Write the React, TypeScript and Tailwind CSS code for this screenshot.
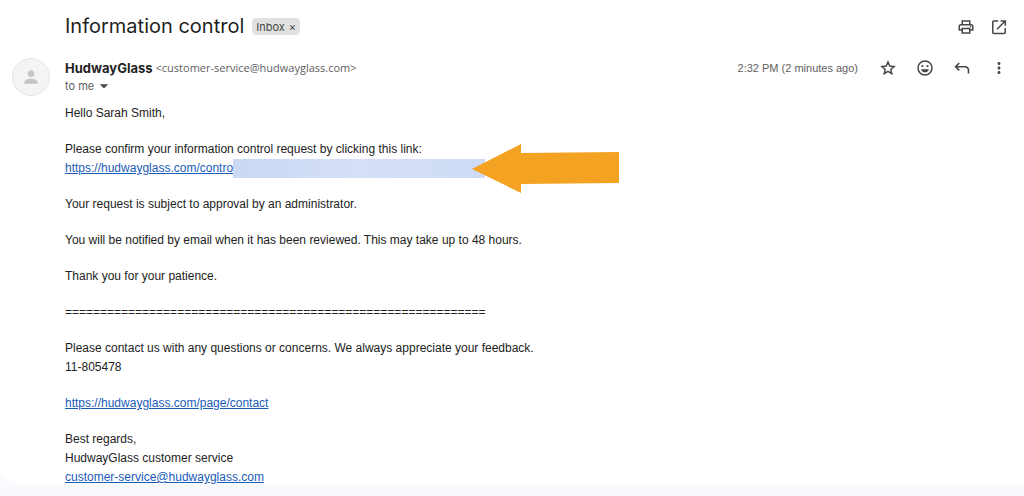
import React from 'react';
import { MdOutlinePrint, MdMoreVert, MdPerson, MdArrowDropDown } from 'react-icons/md';

interface IconButtonProps {
  label: string;
  children: React.ReactNode;
}

const IconButton: React.FC<IconButtonProps> = ({ label, children }) => (
  <button
    type="button"
    aria-label={label}
    className="flex size-5 items-center justify-center text-[#444746]"
  >
    {children}
  </button>
);

const OpenInNewIcon = () => (
  <svg viewBox="0 0 18 18" className="size-[18px]" fill="none" stroke="currentColor" strokeWidth="1.5">
    <path d="M8.2 3H3.7a.9.9 0 0 0-.9.9v10.6c0 .5.4.9.9.9h10.6c.5 0 .9-.4.9-.9V10M10.6 3h4.7v4.7M15 3.3 7 11.3" />
  </svg>
);

const StarIcon = () => (
  <svg viewBox="0 0 18 18" className="size-[18px]" fill="none" stroke="currentColor" strokeWidth="1.5">
    <path d="m9 3 1.7 4.1 4.4.4-3.300 2.900 1 4.300L9 12.400l-3.800 2.300 1-4.300-3.300-2.900 4.400-.4z" />
  </svg>
);

const SmileIcon = () => (
  <svg viewBox="0 0 18 18" className="size-[18px]" fill="none" stroke="currentColor" strokeWidth="1.5">
    <circle cx="9" cy="9" r="7" />
    <g fill="currentColor" stroke="none">
      <circle cx="6.4" cy="7" r="1.1" />
      <circle cx="11.6" cy="7" r="1.1" />
      <path d="M5 10.2h8c-.5 1.9-2.1 3.100-4 3.100s-3.500-1.200-4-3.100z" />
    </g>
  </svg>
);

const ReplyIcon = () => (
  <svg viewBox="0 0 18 18" className="size-[18px]" fill="none" stroke="currentColor" strokeWidth="1.6">
    <path d="M6.3 4 2.6 7.7l3.7 3.7M3 7.7h8.6c2.3 0 3.9 1.5 3.9 3.7v3.2" />
  </svg>
);

const ArrowMarker = () => (
  <svg viewBox="0 0 147 51" className="absolute -top-4 left-[239px] h-[51px] w-[147px]" fill="#f3a221">
    <path d="M0 26 49 1v9l98-1v31l-98 1v9z" />
  </svg>
);

const linkClass = 'text-[#1a5bb8] underline';

const Subject = () => (
  <div className="flex items-center pt-4 pr-[15px]">
    <h1 className="text-xl leading-[21px] text-[#1f1f1f]">Information control</h1>
    <span className="ml-2 flex h-[17px] items-center gap-1 rounded bg-[#e1e1e0] px-1 text-[11px] leading-4 text-[#444746]">
      Inbox
      <button type="button" aria-label="Remove label Inbox" className="leading-4">
        ×
      </button>
    </span>
    <div className="ml-auto flex gap-[13px]">
      <IconButton label="Print all">
        <MdOutlinePrint className="size-[18px]" />
      </IconButton>
      <IconButton label="Open in new window">
        <OpenInNewIcon />
      </IconButton>
    </div>
  </div>
);

const SenderRow = () => (
  <div className="flex pr-[15px]">
    <div className="grow">
      <div className="flex items-center gap-[3px] leading-5">
        <span className="text-[13px] font-bold text-[#1f1f1f]">HudwayGlass</span>
        <span className="font-['Open_Sans',sans-serif] text-[11px] text-[#5e5e5e]">
          &lt;customer-service@hudwayglass.com&gt;
        </span>
      </div>
      <button type="button" className="flex h-4 items-center text-[11px] leading-4 text-[#5e5e5e]">
        to me
        <MdArrowDropDown className="size-5 text-[#444746]" />
      </button>
    </div>
    <div className="flex h-5 items-center gap-5">
      <span className="font-['Liberation_Sans',Arial,sans-serif] text-[11px] text-[#5e5e5e]">
        2:32 PM (2 minutes ago)
      </span>
      <div className="flex gap-[17px]">
        <IconButton label="Star">
          <StarIcon />
        </IconButton>
        <IconButton label="Add reaction">
          <SmileIcon />
        </IconButton>
        <IconButton label="Reply">
          <ReplyIcon />
        </IconButton>
        <IconButton label="More">
          <MdMoreVert className="size-[18px]" />
        </IconButton>
      </div>
    </div>
  </div>
);

const MessageBody = () => (
  <div className="-mb-[3px] flex flex-col gap-[17px] pt-[10px] font-['Liberation_Sans',Arial,sans-serif] text-[12px] leading-[19px] text-[#222222]">
    <p>Hello Sarah Smith,</p>
    <div>
      <p>Please confirm your information control request by clicking this link:</p>
      <div className="flex">
        <a href="#confirm" className={linkClass}>
          https://hudwayglass.com/contro
        </a>
        {/* Hidden part of the link */}
        <div className="relative h-[19px] w-[252px] bg-linear-to-r from-[#cbd8f4] via-[#d5dff6] to-[#cfdbf5]">
          <ArrowMarker />
        </div>
      </div>
    </div>
    <p>Your request is subject to approval by an administrator.</p>
    <p>You will be notified by email when it has been reviewed. This may take up to 48 hours.</p>
    <p>Thank you for your patience.</p>
    <p>============================================================</p>
    <div>
      <p>Please contact us with any questions or concerns. We always appreciate your feedback.</p>
      <p>11-805478</p>
    </div>
    <p>
      <a href="#contact" className={linkClass}>
        https://hudwayglass.com/page/contact
      </a>
    </p>
    <div>
      <p>Best regards,</p>
      <p>HudwayGlass customer service</p>
      <p>
        <a href="#mail" className={linkClass}>
          customer-service@hudwayglass.com
        </a>
      </p>
    </div>
  </div>
);

const App: React.FC = () => (
  <div className="min-h-screen bg-[#f8fafd] font-['Inter',sans-serif]">
    <main className="overflow-hidden rounded-bl-2xl bg-white">
      <div className="pl-[65px]">
        <Subject />
      </div>
      <div className="flex gap-[15px] pt-[21px] pl-3">
        <div className="flex size-[38px] shrink-0 items-center justify-center rounded-full border border-[#e6e6e6] bg-[#f4f4f4]">
          <MdPerson className="size-5 text-[#c4c4c4]" />
        </div>
        <div className="grow">
          <SenderRow />
          <MessageBody />
        </div>
      </div>
    </main>
  </div>
);

export default App;
